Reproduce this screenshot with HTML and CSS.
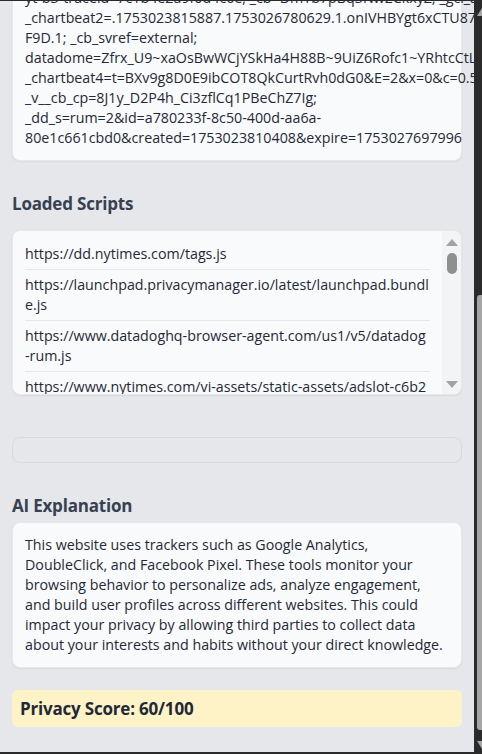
FILE: index.html
```html
<!DOCTYPE html>
<html lang="en">
<head>
<meta charset="utf-8">
<title>Privacy Report</title>
<link rel="stylesheet" href="styles.css">
</head>
<body>
<div class="window">
  <main class="viewport">
    <div class="content">
      <section class="card cookies">
        <div class="line">_pcid=%7B%22browserId%22%3A%22md9x0qz3example%22%7D; nyt-gdpr=0; nyt-purr=cfhhcfhssck;</div>
        <div class="line">nyt-geo=US; nyt-jkidd=uid=0&amp;lastRequest=1753026780629&amp;activeDays=%5B0%2C0%2C0%5D;</div>
        <div class="line">yt-b3-traceid=7c1b4e2a9f0d4c6e; _cb=DmYb7pBq3Nw2CkxyZ; _gcl_au=1.1.14982;</div>
        <div class="line">_chartbeat2=.1753023815887.1753026780629.1.onIVHBYgt6xCTU87.</div>
        <div class="line">F9D.1; _cb_svref=external;</div>
        <div class="line">datadome=Zfrx_U9~xaOsBwWCjYSkHa4H88B~9UiZ6Rofc1~YRhtcCtLq</div>
        <div class="line">_chartbeat4=t=BXv9g8D0E9ibCOT8QkCurtRvh0dG0&amp;E=2&amp;x=0&amp;c=0.5</div>
        <div class="line">_v__cb_cp=8J1y_D2P4h_Ci3zflCq1PBeChZ7Ig;</div>
        <div class="line">_dd_s=rum=2&amp;id=a780233f-8c50-400d-aa6a-</div>
        <div class="line">80e1c661cbd0&amp;created=1753023810408&amp;expire=1753027697996</div>
      </section>

      <h3 class="heading heading-scripts">Loaded Scripts</h3>
      <section class="card scripts">
        <ul class="script-list">
          <li>https://dd.nytimes.com/tags.js</li>
          <li>https://launchpad.privacymanager.io/latest/launchpad.bundle.js</li>
          <li>https://www.datadoghq-browser-agent.com/us1/v5/datadog-rum.js</li>
          <li>https://www.nytimes.com/vi-assets/static-assets/adslot-c6b2e4f1a7d9.js</li>
        </ul>
        <div class="fake-scrollbar">
          <span class="arrow arrow-up"></span>
          <div class="track"><span class="thumb"></span></div>
          <span class="arrow arrow-down"></span>
        </div>
      </section>

      <div class="empty-box"></div>

      <h3 class="heading heading-ai">AI Explanation</h3>
      <section class="card explanation">
        This website uses trackers such as Google Analytics, DoubleClick, and Facebook Pixel. These tools monitor your browsing behavior to personalize ads, analyze engagement, and build user profiles across different websites. This could impact your privacy by allowing third parties to collect data about your interests and habits without your direct knowledge.
      </section>

      <div class="score">Privacy Score: 60/100</div>
    </div>
  </main>
  <div class="page-scrollbar">
    <span class="page-arrow page-arrow-up"></span>
    <span class="page-thumb"></span>
    <span class="page-arrow page-arrow-down"></span>
  </div>
</div>
</body>
</html>
```

FILE: styles.css
```css
* { box-sizing: border-box; }

html, body {
  margin: 0;
  padding: 0;
  background: #2b2b2b;
}

body {
  font-family: "Open Sans", "Noto Sans", Arial, sans-serif;
  font-size: 14.25px;
  line-height: 20px;
  color: #1f2937;
}

.window {
  display: flex;
  width: 482px;
  height: 754px;
  padding-top: 1px;
  padding-bottom: 2px;
}

.viewport {
  width: 474px;
  flex: none;
  height: 100%;
  overflow: hidden;
  background: #e5e7eb;
}

.content {
  padding: 0 12px;
  display: flex;
  flex-direction: column;
}

.card {
  background: #f9fafb;
  border: 1px solid #e5e7eb;
  border-radius: 8px;
  box-shadow: 0 1px 2px rgba(0, 0, 0, 0.06);
}

.cookies {
  margin-top: -66px;
  padding: 12px;
}

.line {
  white-space: nowrap;
}

.heading {
  margin: 0;
  font-size: 17px;
  line-height: 24px;
  font-weight: 700;
  letter-spacing: -0.2px;
  color: #374151;
}

.heading-scripts {
  margin-top: 31px;
  margin-bottom: 14px;
}

.scripts {
  display: flex;
  height: 165px;
  overflow: hidden;
}

.script-list {
  list-style: none;
  margin: 0;
  padding: 8px 12px 0 12px;
  flex: 1;
  min-width: 0;
  overflow: hidden;
}

.script-list li {
  padding: 5px 0;
  border-bottom: 1px solid #e5e7eb;
  word-break: break-all;
}

.fake-scrollbar {
  width: 19px;
  flex: none;
  background: #f3f4f6;
  display: flex;
  flex-direction: column;
  align-items: center;
  padding: 8px 0 6px;
}

.arrow {
  width: 0;
  height: 0;
  border-left: 6px solid transparent;
  border-right: 6px solid transparent;
}

.arrow-up { border-bottom: 7px solid #a3a3a3; }
.arrow-down { border-top: 7px solid #a3a3a3; }

.track {
  flex: 1;
  width: 100%;
  display: flex;
  justify-content: center;
  padding-top: 7px;
}

.thumb {
  width: 10px;
  height: 21px;
  border-radius: 5px;
  background: #8f8f8f;
}

.empty-box {
  margin-top: 42px;
  height: 26px;
  border: 1px solid #d6d9de;
  border-radius: 8px;
}

.heading-ai {
  margin-top: 31px;
  margin-bottom: 4px;
}

.explanation {
  padding: 12px;
}

.score {
  margin-top: 22px;
  background: #fef3c7;
  border-radius: 6px;
  padding: 8px 8px;
  font-size: 17px;
  line-height: 21px;
  font-weight: 700;
  letter-spacing: -0.2px;
  color: #1f2937;
}

.page-scrollbar {
  flex: 1;
  display: flex;
  flex-direction: column;
  align-items: flex-end;
  overflow: hidden;
  padding-top: 7px;
  padding-bottom: 3px;
}

.page-arrow {
  width: 0;
  height: 0;
  margin-right: -5px;
  border-left: 5px solid transparent;
  border-right: 5px solid transparent;
}

.page-arrow-up {
  border-bottom: 8px solid #a6a6a6;
}

.page-arrow-down {
  border-top: 8px solid #a6a6a6;
}

.page-thumb {
  width: 5px;
  flex: 1;
  margin: 279px 0 11px;
  background: #a6a6a6;
  border-radius: 3px 0 0 3px;
}
```
